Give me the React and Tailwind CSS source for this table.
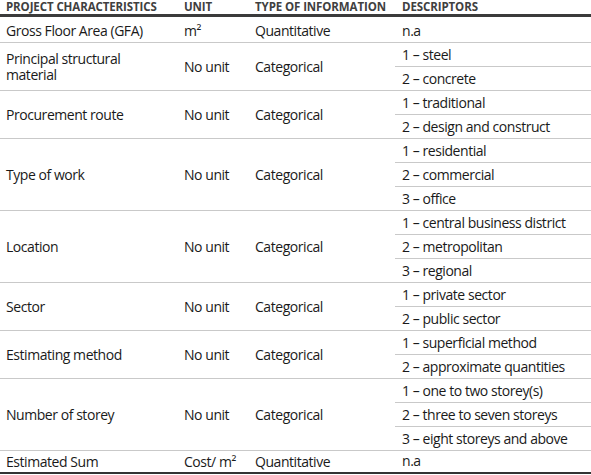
import React from "react";

const groups = [
  { name: "Gross Floor Area (GFA)", unit: "m²", type: "Quantitative", desc: ["n.a"] },
  { name: "Principal structural material", unit: "No unit", type: "Categorical", desc: ["1 – steel", "2 – concrete"] },
  { name: "Procurement route", unit: "No unit", type: "Categorical", desc: ["1 – traditional", "2 – design and construct"] },
  { name: "Type of work", unit: "No unit", type: "Categorical", desc: ["1 – residential", "2 – commercial", "3 – office"] },
  { name: "Location", unit: "No unit", type: "Categorical", desc: ["1 – central business district", "2 – metropolitan", "3 – regional"] },
  { name: "Sector", unit: "No unit", type: "Categorical", desc: ["1 – private sector", "2 – public sector"] },
  { name: "Estimating method", unit: "No unit", type: "Categorical", desc: ["1 – superficial method", "2 – approximate quantities"] },
  { name: "Number of storey", unit: "No unit", type: "Categorical", desc: ["1 – one to two storey(s)", "2 – three to seven storeys", "3 – eight storeys and above"] },
  { name: "Estimated Sum", unit: "Cost/ m²", type: "Quantitative", desc: ["n.a"] },
];

export default function App() {
  return (
    <div className="w-[591px] h-[475px] bg-white text-[#1a1a1a] font-['Open_Sans','Liberation_Sans',sans-serif]">
      <div className="flex h-[17px] border-b-[3px] border-[#3b3b3b] text-[11.5px] font-bold uppercase text-[#404040] leading-[13px] tracking-[-0.1px]">
        <div className="w-[177px] pl-[6px]">Project characteristics</div>
        <div className="w-[71px] pl-[7px]">Unit</div>
        <div className="w-[147px] pl-[7px]">Type of information</div>
        <div className="flex-1 pl-[7px]">Descriptors</div>
      </div>
      <div className="pt-[2px]">
        {groups.map((g, i) => {
          const last = i === groups.length - 1;
          return (
            <div
              key={i}
              className={
                "flex text-[14px] tracking-[-0.45px] " +
                (last ? "border-b-2 border-[#333]" : "border-b border-[#c9c9c9]")
              }
            >
              <div className="w-[177px] pl-[6px] pr-[4px] flex items-center leading-[16px]">
                <div>{g.name}</div>
              </div>
              <div className="w-[71px] pl-[7px] flex items-center">{g.unit}</div>
              <div className="w-[147px] pl-[7px] flex items-center">{g.type}</div>
              <div className="flex-1 flex flex-col">
                {g.desc.map((d, j) => (
                  <div
                    key={j}
                    className={
                      (last ? "h-[19px] " : "h-[23px] ") +
                      "pl-[7px] flex items-center " +
                      (j < g.desc.length - 1 ? "border-b border-[#c9c9c9] box-content" : "")
                    }
                  >
                    {d}
                  </div>
                ))}
              </div>
            </div>
          );
        })}
      </div>
    </div>
  );
}
